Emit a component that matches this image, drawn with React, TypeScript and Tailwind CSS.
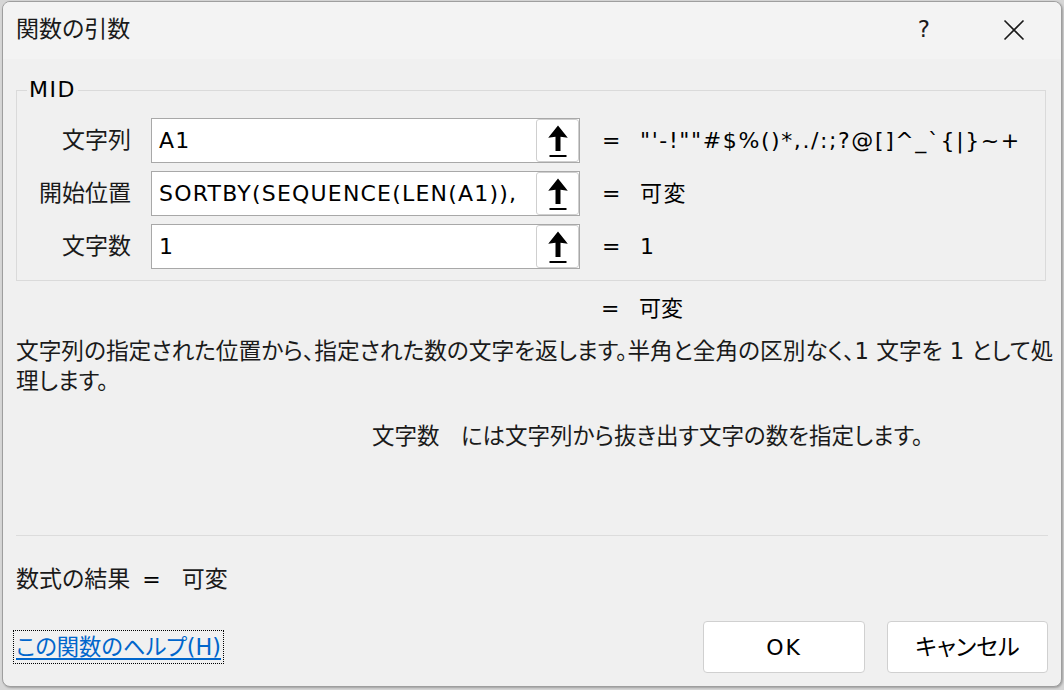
import React from "react";

const font = "[font-family:'DejaVu_Sans','Noto_Sans_CJK_JP',sans-serif] [font-feature-settings:'palt']";

function ArrowButton() {
  return (
    <div className="h-full w-[43px] shrink-0 rounded-[3px] border border-[#cfcfcf] bg-white flex items-center justify-center">
      <svg width="22" height="34" viewBox="0 0 22 34">
        <path d="M11 1.5 L20.8 13.8 L13.5 12.8 L13.5 27 L8.5 27 L8.5 12.8 L1.2 13.8 Z" fill="#000" />
        <rect x="2.5" y="31" width="17" height="2" fill="#000" />
      </svg>
    </div>
  );
}

function ArgRow({ label, value, result }: { label: string; value: string; result: string }) {
  return (
    <div className="flex items-center h-[45px]">
      <div className="w-[114px] text-right text-[23px] text-[#1a1a1a] whitespace-nowrap">{label}</div>
      <div className="ml-[20px] w-[429px] h-[45px] border border-[#a8a8a8] bg-white flex items-stretch">
        <div className="flex-1 pl-[7px] flex items-center text-[22px] tracking-[1.2px] text-black overflow-hidden whitespace-nowrap">
          {value}
        </div>
        <ArrowButton />
      </div>
      <div className="ml-[22px] w-[16px] text-[22px] text-black">=</div>
      <div className="ml-[22px] text-[22px] tracking-[1.6px] text-black whitespace-nowrap overflow-hidden w-[386px]">{result}</div>
    </div>
  );
}

export default function App() {
  return (
    <div className={`w-[1064px] h-[690px] bg-[#d6d6d6] pt-[1px] pl-[2px] ${font}`}>
      <div className="w-[1060px] h-[686px] rounded-[8px] border border-[#9e9e9e] bg-[#f0f0f0] overflow-hidden flex flex-col shadow-[1px_1px_2px_rgba(0,0,0,0.25)]">
        {/* Title bar */}
        <div className="h-[57px] shrink-0 bg-[#f3f3f3] flex items-center">
          <div className="ml-[13px] text-[23px] text-[#1a1a1a] -mt-[3px]">関数の引数</div>
          <div className="flex-1" />
          <div className="text-[23px] text-[#1a1a1a] -mt-[3px] mr-[73px]">?</div>
          <svg width="22" height="22" viewBox="0 0 22 22" className="mr-[36px] -mt-[2px]">
            <path d="M1.5 1.5 L20.5 20.5 M20.5 1.5 L1.5 20.5" stroke="#1a1a1a" strokeWidth="1.6" />
          </svg>
        </div>

        {/* Body */}
        <div className="flex-1 flex flex-col px-[13px] text-[#1a1a1a]">
          <fieldset className="mt-[18px] h-[204px] border border-[#dadada] px-0 mr-[2px]">
            <legend className="ml-[10px] px-[2px] text-[22px] tracking-[1.5px] leading-[26px] text-black">MID</legend>
            <div className="mt-[15px] flex flex-col gap-[8px]">
              <ArgRow label="文字列" value="A1" result={"\"'-!\"\"#$%()*,./:;?@[]^_`{|}~+"} />
              <ArgRow label="開始位置" value="SORTBY(SEQUENCE(LEN(A1))," result="可変" />
              <ArgRow label="文字数" value="1" result="1" />
            </div>
          </fieldset>

          <div className="mt-[12px] flex items-center h-[30px] text-[22px] text-black">
            <div className="ml-[585px] w-[16px]">=</div>
            <div className="ml-[22px]">可変</div>
          </div>

          <div className="mt-[13px] text-[22.7px] leading-[30px] text-[#1a1a1a] whitespace-nowrap">
            <div>文字列の指定された位置から、指定された数の文字を返します。半角と全角の区別なく、1 文字を 1 として処</div>
            <div>理します。</div>
          </div>

          <div className="mt-[25px] ml-[356px] text-[22.5px] leading-[30px] text-[#1a1a1a] whitespace-nowrap">
            文字数&nbsp;&nbsp;&nbsp;には文字列から抜き出す文字の数を指定します。
          </div>

          <div className="mt-[84px] h-px bg-[#dcdcdc]" />

          <div className="mt-[28px] flex items-center h-[30px] text-[23px] text-[#1a1a1a]">
            <span>数式の結果</span>
            <span className="ml-[12px] text-black text-[22px]">=</span>
            <span className="ml-[21px]">可変</span>
          </div>

          <div className="mt-[27px] flex items-start">
            <div className="-ml-[3px] mt-[9px] h-[34px] border border-dotted border-black px-[2px] flex items-center">
              <span className="text-[22.3px] leading-[30px] text-[#0066cc] underline decoration-[2px] underline-offset-[3px]">
                この関数のヘルプ(H)
              </span>
            </div>
            <div className="flex-1" />
            <button className="w-[162px] h-[52px] rounded-[4px] border border-[#d0d0d0] bg-white text-[22px] tracking-[2px] text-black">
              OK
            </button>
            <button className="ml-[22px] w-[161px] h-[52px] rounded-[4px] border border-[#d0d0d0] bg-white text-[23px] text-black">
              キャンセル
            </button>
          </div>
        </div>
      </div>
    </div>
  );
}
